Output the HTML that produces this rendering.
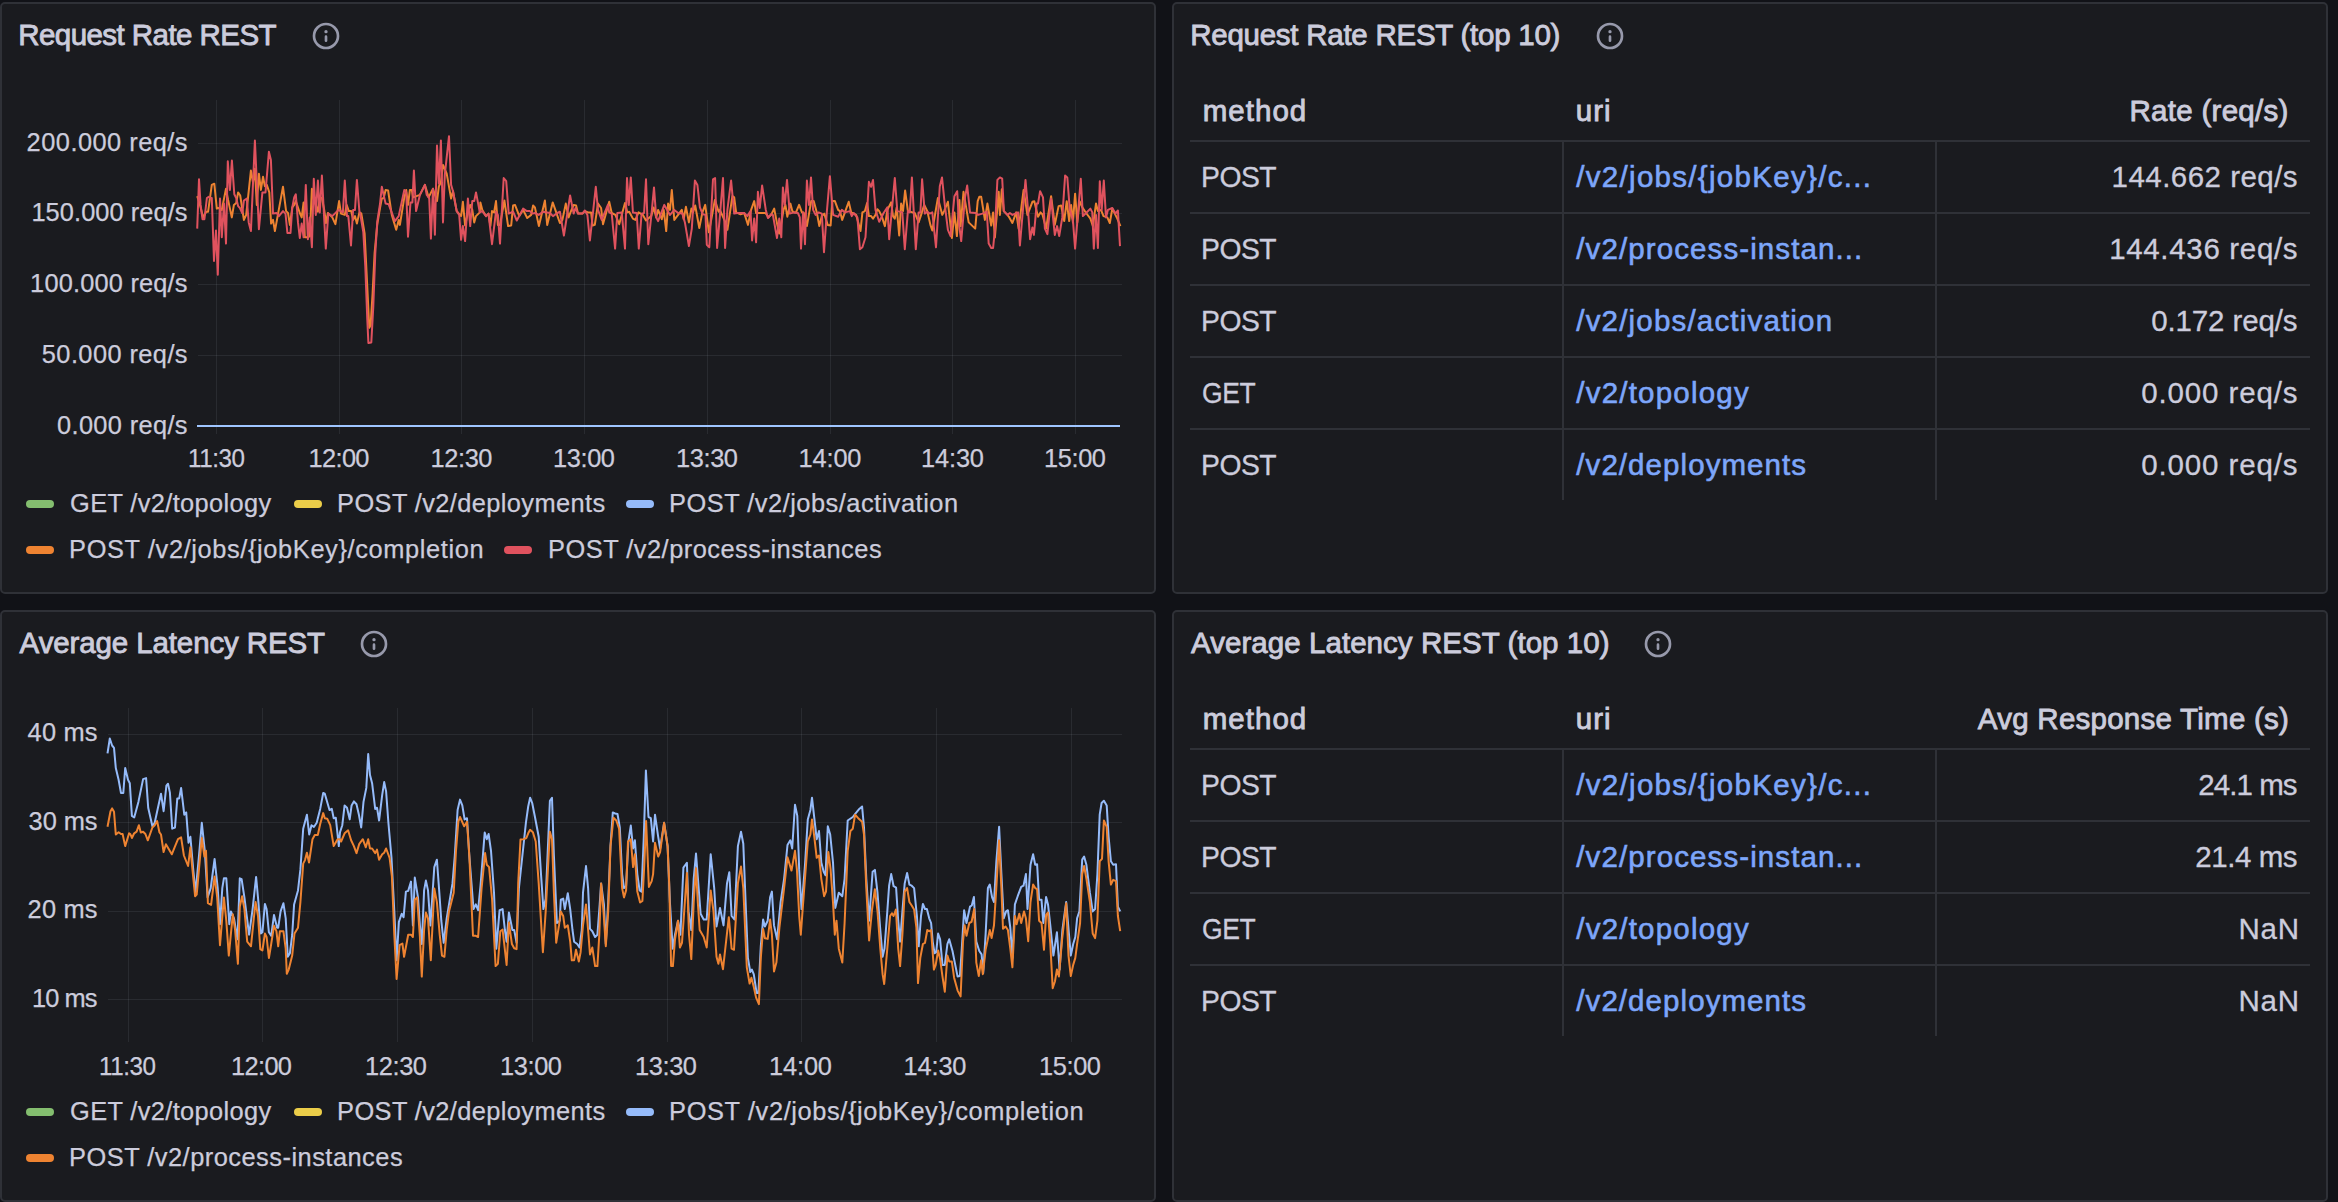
<!DOCTYPE html>
<html lang="en"><head><meta charset="utf-8"><title>REST API dashboard</title>
<style>
html,body{margin:0;padding:0;background:#111217;}
body{width:2338px;height:1202px;position:relative;overflow:hidden;font-family:"Liberation Sans",Arial,sans-serif;color:#ccccdc;}
.panel{position:absolute;box-sizing:border-box;background:#1a1b1f;border:2px solid #2f3137;border-radius:5px;}
.t{position:absolute;white-space:nowrap;line-height:40px;height:40px;color:#ccccdc;}
.title{font-size:29.5px;-webkit-text-stroke:0.85px #ccccdc;}
.th{font-size:29.5px;-webkit-text-stroke:0.85px #ccccdc;}
.td{font-size:29.5px;-webkit-text-stroke:0.3px #ccccdc;}
.lk{font-size:29.5px;color:#7da6fa;-webkit-text-stroke:0.6px #7da6fa;}
.ax{font-size:25.4px;-webkit-text-stroke:0.25px #ccccdc;}
.lg{font-size:25.4px;-webkit-text-stroke:0.25px #ccccdc;}
.mk{position:absolute;display:block;width:28px;height:8px;border-radius:4px;}
.info{position:absolute;}
.hl{position:absolute;height:2px;background:#2f3137;}
.vl{position:absolute;width:2px;background:#2f3137;}
svg.chart{position:absolute;left:0;top:0;}
</style></head><body>

<div class="panel" style="left:0;top:2px;width:1156px;height:592px"></div>
<div class="panel" style="left:1172px;top:2px;width:1156px;height:592px"></div>
<div class="panel" style="left:0;top:610px;width:1156px;height:592px"></div>
<div class="panel" style="left:1172px;top:610px;width:1156px;height:592px"></div>
<svg class="chart" width="2338" height="1202" viewBox="0 0 2338 1202">
<rect x="216" y="100" width="1" height="334" fill="rgb(200,215,225)" fill-opacity="0.09"/>
<rect x="339" y="100" width="1" height="334" fill="rgb(200,215,225)" fill-opacity="0.09"/>
<rect x="461" y="100" width="1" height="334" fill="rgb(200,215,225)" fill-opacity="0.09"/>
<rect x="584" y="100" width="1" height="334" fill="rgb(200,215,225)" fill-opacity="0.09"/>
<rect x="707" y="100" width="1" height="334" fill="rgb(200,215,225)" fill-opacity="0.09"/>
<rect x="830" y="100" width="1" height="334" fill="rgb(200,215,225)" fill-opacity="0.09"/>
<rect x="952" y="100" width="1" height="334" fill="rgb(200,215,225)" fill-opacity="0.09"/>
<rect x="1075" y="100" width="1" height="334" fill="rgb(200,215,225)" fill-opacity="0.09"/>
<rect x="198" y="143" width="924" height="1" fill="rgb(200,215,225)" fill-opacity="0.09"/>
<rect x="198" y="213" width="924" height="1" fill="rgb(200,215,225)" fill-opacity="0.09"/>
<rect x="198" y="284" width="924" height="1" fill="rgb(200,215,225)" fill-opacity="0.09"/>
<rect x="198" y="355" width="924" height="1" fill="rgb(200,215,225)" fill-opacity="0.09"/>
<path d="M197.2 196.1 L200.0 204.9 L203.1 217.4 L206.2 211.7 L208.1 211.7 L211.8 184.9 L214.3 183.7 L216.8 208.6 L218.7 208.0 L221.8 209.9 L226.0 188.7 L228.1 199.9 L231.8 217.4 L233.9 204.9 L236.2 203.0 L238.1 192.4 L240.2 195.5 L243.9 219.9 L246.2 214.9 L250.9 170.6 L253.0 182.4 L254.9 168.7 L256.8 204.9 L258.9 173.7 L260.9 189.9 L263.0 176.8 L264.9 186.2 L266.8 184.9 L269.3 192.4 L271.1 223.6 L273.0 219.9 L274.9 231.1 L283.0 186.8 L286.1 211.1 L288.0 213.0 L289.9 224.9 L292.3 207.4 L294.2 204.9 L295.8 201.1 L299.8 213.0 L301.7 217.4 L303.6 202.4 L304.8 237.3 L307.9 237.3 L309.8 236.1 L311.9 188.7 L313.8 199.9 L315.8 204.9 L317.9 211.7 L319.8 197.4 L321.9 198.0 L324.2 209.9 L326.0 223.0 L327.9 213.0 L332.3 217.4 L335.4 224.2 L339.1 201.1 L341.0 213.6 L344.8 214.9 L346.6 204.9 L348.8 211.1 L351.2 211.1 L353.1 219.9 L355.0 216.1 L356.9 223.6 L359.4 212.4 L361.3 213.3 L364.6 233.3 L366.6 273.2 L369.3 327.8 L370.6 325.1 L372.6 293.2 L374.6 253.2 L377.3 224.0 L380.0 208.0 L381.8 198.6 L383.7 198.0 L385.6 189.9 L388.1 190.5 L391.8 214.9 L396.2 229.8 L398.7 219.9 L399.9 224.9 L404.3 197.4 L406.2 189.9 L408.0 204.9 L409.9 189.9 L411.8 189.9 L413.0 197.4 L419.9 194.9 L424.9 184.9 L428.6 197.4 L431.1 192.4 L433.0 188.7 L434.9 194.9 L437.0 201.1 L438.9 186.2 L440.9 182.4 L443.0 164.9 L446.7 173.7 L451.1 198.6 L453.0 191.2 L456.7 211.1 L461.1 216.1 L462.9 201.8 L465.1 225.5 L467.9 212.4 L470.2 204.9 L472.3 209.9 L474.2 222.4 L476.0 216.1 L479.8 212.4 L480.4 202.4 L482.3 209.9 L486.0 216.1 L488.5 213.6 L490.4 226.1 L492.0 211.1 L494.1 212.4 L496.0 201.1 L497.9 224.9 L500.0 224.9 L504.4 200.5 L508.1 226.1 L511.2 225.5 L513.1 205.5 L515.0 204.9 L519.3 216.1 L523.1 209.9 L527.2 218.0 L531.2 214.9 L533.1 205.5 L534.9 207.4 L538.9 226.1 L544.9 200.5 L547.2 224.9 L552.7 202.4 L556.2 212.4 L559.9 223.0 L562.4 219.9 L565.8 203.6 L568.6 217.4 L570.5 212.4 L573.6 204.9 L576.1 205.5 L578.0 213.6 L582.4 213.6 L584.9 211.1 L588.0 212.4 L591.1 212.4 L592.6 225.5 L594.8 224.9 L598.0 203.6 L601.1 208.0 L603.0 224.2 L609.2 201.8 L611.7 213.0 L615.4 214.9 L619.2 224.2 L625.0 203.0 L627.3 212.4 L629.2 211.7 L632.9 218.6 L635.4 219.9 L638.5 212.4 L642.9 214.9 L646.0 220.5 L651.2 216.1 L653.7 207.4 L656.2 217.4 L658.1 209.9 L661.8 219.2 L663.7 209.9 L666.2 231.1 L668.1 203.6 L670.0 209.9 L671.8 189.9 L674.3 219.9 L678.1 214.9 L681.8 209.9 L683.7 219.2 L685.9 206.8 L688.9 222.4 L691.4 208.6 L693.0 212.4 L695.2 205.5 L699.3 228.0 L702.4 212.4 L705.2 204.9 L708.9 232.3 L714.9 199.9 L718.6 211.7 L719.9 209.9 L724.9 221.1 L727.4 229.8 L732.4 196.1 L734.2 197.4 L736.1 212.4 L740.5 214.2 L744.2 213.0 L748.0 224.9 L751.1 209.9 L754.2 201.1 L756.1 213.0 L765.4 213.0 L768.6 217.4 L771.1 214.9 L774.2 208.6 L777.3 224.9 L779.2 233.6 L781.0 224.9 L783.5 209.9 L785.4 204.9 L787.3 216.7 L790.4 203.6 L792.3 211.1 L794.1 212.4 L796.0 212.4 L799.1 204.9 L801.9 212.4 L803.7 212.4 L806.9 226.1 L811.2 201.1 L813.7 201.1 L816.8 212.4 L819.3 226.1 L821.8 216.1 L824.3 213.6 L827.7 224.9 L830.6 225.5 L832.4 201.1 L834.9 201.1 L838.1 209.9 L839.9 211.1 L842.2 219.9 L844.9 212.4 L848.7 201.8 L851.2 212.4 L856.2 214.9 L860.5 231.1 L862.4 212.4 L864.9 211.1 L867.1 203.0 L868.9 216.1 L871.1 216.1 L873.0 218.6 L875.5 214.9 L877.4 209.3 L879.2 211.1 L881.7 216.1 L884.9 226.1 L887.4 209.9 L891.1 202.4 L893.0 216.1 L894.8 218.6 L896.7 207.4 L899.2 235.5 L901.1 203.6 L903.0 211.1 L905.1 190.5 L907.9 211.1 L914.8 213.0 L918.6 222.4 L921.1 214.9 L924.2 204.9 L927.3 211.1 L930.4 224.9 L932.3 230.5 L937.9 198.0 L942.3 214.9 L944.1 211.1 L947.9 201.8 L951.9 238.0 L954.4 212.4 L956.9 236.1 L959.4 199.9 L960.6 226.1 L963.5 191.8 L968.7 222.4 L975.2 228.6 L977.7 201.2 L979.3 196.8 L981.2 196.8 L984.9 219.9 L987.4 203.6 L991.2 225.5 L993.1 212.4 L994.9 237.4 L998.7 191.8 L999.9 214.9 L1001.8 189.3 L1003.7 211.1 L1007.4 214.9 L1009.3 217.4 L1012.4 223.0 L1016.2 212.4 L1018.6 228.6 L1023.6 189.9 L1027.4 214.9 L1032.4 201.8 L1034.3 201.2 L1038.0 216.8 L1040.5 212.4 L1042.4 214.3 L1046.1 228.6 L1051.1 196.2 L1054.8 224.9 L1058.6 206.1 L1061.1 205.5 L1064.2 221.1 L1066.7 201.2 L1069.2 221.1 L1071.1 204.9 L1072.9 222.4 L1075.1 193.7 L1077.3 222.4 L1079.6 201.2 L1082.3 207.4 L1086.1 213.0 L1090.4 218.6 L1092.9 226.1 L1096.0 203.6 L1097.9 211.1 L1101.0 209.9 L1103.5 216.1 L1107.3 217.4 L1109.8 223.0 L1112.3 208.6 L1117.3 218.6 L1120.4 226.1" fill="none" stroke="#ee8331" stroke-width="2" stroke-linejoin="round" stroke-linecap="butt"/>
<path d="M197.2 228.6 L199.0 179.3 L200.6 204.9 L202.5 219.2 L204.4 219.2 L206.9 198.0 L208.7 196.8 L210.2 198.0 L211.8 198.0 L214.0 261.0 L216.0 230.5 L217.8 274.8 L220.0 198.6 L221.8 237.3 L224.0 203.6 L226.0 243.6 L227.8 161.2 L229.9 189.9 L231.9 160.6 L234.3 194.3 L236.2 198.0 L238.1 206.1 L239.9 208.0 L242.2 213.0 L243.9 200.5 L246.8 198.6 L248.7 222.4 L250.9 231.1 L254.9 140.6 L258.9 229.2 L262.4 192.4 L265.5 192.4 L268.9 151.8 L270.9 160.0 L273.0 213.6 L276.7 213.0 L278.9 216.1 L283.0 211.1 L285.5 213.6 L287.4 233.0 L290.5 233.0 L292.3 207.4 L294.2 197.4 L295.8 194.3 L298.0 222.4 L299.8 238.0 L301.7 223.6 L303.6 237.3 L305.8 184.9 L307.9 239.2 L309.8 217.4 L311.9 247.3 L313.8 178.7 L315.8 214.9 L317.9 180.5 L319.8 212.4 L321.9 175.6 L325.8 248.6 L328.3 213.6 L332.3 216.1 L338.5 209.9 L342.9 212.4 L344.8 180.5 L347.0 216.1 L348.3 216.1 L351.0 245.4 L353.1 209.9 L355.0 209.9 L356.9 179.9 L359.4 211.7 L360.0 212.6 L363.3 232.0 L365.3 266.6 L367.3 319.8 L368.4 343.0 L371.3 342.4 L373.3 306.5 L375.3 253.2 L377.3 221.3 L380.0 204.0 L381.8 186.8 L385.6 203.6 L388.7 204.3 L394.9 221.1 L398.7 216.1 L404.3 189.9 L406.2 192.4 L408.0 236.7 L410.5 202.4 L412.4 202.4 L413.9 170.6 L416.1 211.1 L419.9 194.9 L424.9 184.9 L426.7 194.9 L429.2 198.0 L430.9 238.6 L433.0 188.7 L434.9 234.8 L437.0 145.6 L438.9 183.7 L440.9 140.6 L443.0 222.4 L444.8 174.9 L449.0 136.2 L451.1 184.9 L453.0 191.2 L456.7 211.1 L459.2 214.9 L461.1 239.8 L462.9 226.1 L465.1 241.1 L467.9 198.6 L470.2 226.1 L472.3 201.1 L474.2 201.1 L476.0 192.4 L479.8 212.4 L482.3 211.1 L486.0 216.1 L488.5 213.6 L492.0 244.2 L496.0 211.7 L497.9 214.9 L500.0 243.6 L503.7 178.0 L506.2 181.2 L508.7 213.6 L513.1 211.7 L516.8 220.5 L523.1 208.6 L526.8 211.1 L529.9 211.1 L532.4 213.6 L534.9 213.0 L538.7 214.9 L543.0 211.7 L549.9 213.0 L553.0 216.1 L557.4 213.0 L559.9 211.7 L563.9 235.5 L570.1 195.5 L573.6 213.6 L575.5 208.0 L578.0 213.6 L582.4 213.6 L584.9 210.5 L587.4 214.9 L589.9 240.5 L595.8 186.8 L598.0 209.9 L601.7 219.9 L607.9 204.9 L609.2 212.4 L611.7 213.6 L615.1 248.6 L617.3 213.0 L621.7 212.4 L625.0 248.6 L627.0 178.0 L628.8 204.9 L630.8 177.4 L632.9 212.4 L636.7 213.0 L638.8 248.6 L641.6 213.6 L644.1 213.0 L646.0 179.3 L648.3 244.2 L651.9 209.9 L654.0 187.4 L656.2 217.4 L658.1 221.1 L664.3 204.9 L670.0 214.9 L674.3 209.9 L678.1 213.0 L682.4 213.6 L684.9 222.4 L688.9 246.1 L691.8 228.6 L694.9 180.5 L697.4 184.9 L699.9 207.4 L702.7 214.2 L705.5 214.9 L706.8 244.8 L709.3 247.3 L713.0 179.3 L715.1 178.0 L717.1 247.9 L719.9 216.1 L723.0 178.0 L725.1 247.9 L727.4 209.9 L731.1 180.5 L734.2 213.6 L737.4 213.0 L744.2 213.0 L747.3 216.1 L750.5 211.1 L752.1 240.5 L754.2 218.6 L756.1 242.3 L757.9 191.8 L759.8 208.0 L762.1 185.5 L765.8 209.9 L767.9 218.0 L771.1 214.2 L772.9 214.9 L777.0 238.0 L779.2 218.6 L781.3 237.3 L782.9 187.4 L784.8 204.9 L787.0 179.9 L789.8 213.6 L794.1 212.4 L797.9 213.0 L799.8 217.4 L801.0 248.6 L803.1 212.4 L805.0 244.2 L806.9 180.5 L809.0 204.9 L811.0 177.4 L813.1 209.9 L815.6 214.9 L818.7 212.4 L821.8 213.6 L824.0 252.3 L826.8 212.4 L829.9 176.2 L833.1 214.9 L838.1 216.7 L841.8 209.9 L844.9 212.4 L849.9 211.1 L851.8 216.1 L853.7 213.0 L857.4 217.4 L859.9 249.2 L862.4 247.3 L865.5 237.3 L868.9 181.8 L871.1 186.8 L873.0 179.9 L875.5 209.9 L879.2 221.7 L883.6 213.0 L887.4 207.4 L889.2 239.2 L894.8 178.0 L897.3 211.1 L902.3 212.4 L904.8 249.2 L907.9 211.1 L909.8 212.4 L911.9 177.4 L915.8 249.2 L918.6 212.4 L920.4 212.4 L922.1 179.3 L924.8 213.6 L927.3 211.7 L929.8 213.6 L932.3 212.4 L936.0 247.3 L939.8 186.2 L942.0 177.4 L944.8 204.9 L947.9 229.8 L950.6 236.1 L954.4 196.2 L957.2 191.2 L959.0 223.6 L961.2 241.1 L965.0 197.4 L967.2 185.5 L970.0 212.4 L975.6 213.0 L978.1 214.9 L982.4 213.6 L986.8 211.8 L988.7 243.6 L991.2 248.0 L993.1 248.0 L994.9 229.9 L997.4 179.9 L999.9 177.4 L1002.2 178.7 L1003.9 211.1 L1007.4 214.9 L1009.9 213.0 L1012.4 214.9 L1018.0 212.4 L1019.9 245.5 L1025.5 179.9 L1028.0 209.9 L1030.1 239.2 L1032.4 227.4 L1033.9 234.9 L1036.7 203.6 L1038.0 203.6 L1040.1 191.2 L1043.0 197.4 L1044.9 228.6 L1047.4 234.2 L1051.1 198.7 L1054.8 234.9 L1057.1 226.1 L1059.2 236.1 L1062.3 217.4 L1065.1 175.6 L1067.3 177.4 L1069.8 209.9 L1072.9 219.9 L1075.1 248.6 L1080.8 178.7 L1082.9 216.1 L1086.1 213.0 L1090.4 208.6 L1092.3 212.4 L1093.8 248.6 L1096.0 214.9 L1097.9 248.0 L1099.8 181.2 L1101.7 209.9 L1103.8 180.6 L1106.0 217.4 L1107.9 209.9 L1112.3 208.0 L1115.4 213.6 L1117.9 210.5 L1120.0 246.1" fill="none" stroke="#e0525e" stroke-width="2" stroke-linejoin="round" stroke-linecap="butt"/>
<rect x="197" y="425" width="923" height="2" fill="#9fc5ff"/>
<rect x="128" y="708" width="1" height="334" fill="rgb(200,215,225)" fill-opacity="0.09"/>
<rect x="262" y="708" width="1" height="334" fill="rgb(200,215,225)" fill-opacity="0.09"/>
<rect x="397" y="708" width="1" height="334" fill="rgb(200,215,225)" fill-opacity="0.09"/>
<rect x="532" y="708" width="1" height="334" fill="rgb(200,215,225)" fill-opacity="0.09"/>
<rect x="667" y="708" width="1" height="334" fill="rgb(200,215,225)" fill-opacity="0.09"/>
<rect x="801" y="708" width="1" height="334" fill="rgb(200,215,225)" fill-opacity="0.09"/>
<rect x="936" y="708" width="1" height="334" fill="rgb(200,215,225)" fill-opacity="0.09"/>
<rect x="1071" y="708" width="1" height="334" fill="rgb(200,215,225)" fill-opacity="0.09"/>
<rect x="108" y="734" width="1014" height="1" fill="rgb(200,215,225)" fill-opacity="0.09"/>
<rect x="108" y="822" width="1014" height="1" fill="rgb(200,215,225)" fill-opacity="0.09"/>
<rect x="108" y="911" width="1014" height="1" fill="rgb(200,215,225)" fill-opacity="0.09"/>
<rect x="108" y="999" width="1014" height="1" fill="rgb(200,215,225)" fill-opacity="0.09"/>
<path d="M107.5 753.4 L109.8 738.5 L112.1 745.5 L114.0 747.8 L115.8 768.1 L118.6 779.7 L121.0 793.0 L123.3 793.0 L125.2 768.1 L128.0 779.7 L129.8 783.2 L131.9 815.9 L134.2 817.5 L138.4 801.9 L143.1 779.1 L146.1 778.1 L148.2 807.7 L152.4 826.3 L154.7 822.8 L161.0 793.7 L163.6 811.2 L166.4 785.6 L168.0 783.7 L169.9 792.6 L172.2 828.7 L175.0 827.5 L177.3 798.4 L179.2 798.4 L181.1 787.9 L184.3 814.7 L186.2 812.4 L188.5 842.7 L190.4 836.8 L193.2 869.4 L195.5 892.7 L199.0 855.5 L201.8 822.8 L204.8 850.8 L207.6 897.4 L210.7 888.1 L214.6 859.0 L217.7 888.1 L220.0 924.2 L222.3 888.1 L223.9 878.3 L226.3 878.3 L229.3 924.2 L230.9 911.4 L234.0 918.4 L237.5 939.3 L239.8 878.3 L241.6 879.2 L244.4 897.4 L249.1 934.7 L252.6 909.1 L256.1 876.9 L258.4 902.1 L260.8 933.5 L262.4 932.3 L264.9 903.9 L266.6 909.1 L268.9 932.3 L271.2 935.8 L274.0 914.9 L277.1 927.7 L278.2 927.7 L280.6 911.4 L283.4 903.2 L285.7 918.4 L287.8 956.8 L289.9 953.3 L292.2 934.7 L294.1 904.4 L298.0 890.4 L300.4 869.4 L303.2 828.7 L306.9 814.7 L309.2 834.5 L311.5 825.2 L313.9 827.0 L316.7 822.8 L320.2 808.9 L323.2 793.0 L324.8 793.7 L329.5 810.0 L331.8 808.9 L333.7 818.2 L335.8 817.7 L338.8 846.1 L340.0 832.2 L342.3 825.2 L344.6 805.4 L347.0 807.7 L349.7 819.4 L351.6 805.4 L353.9 801.4 L356.5 804.2 L358.9 814.7 L361.2 827.5 L363.5 801.9 L366.3 787.9 L368.2 754.1 L370.0 775.1 L372.1 783.2 L375.2 808.9 L377.0 807.7 L379.1 820.5 L382.2 794.9 L384.2 782.1 L386.1 791.4 L388.4 822.8 L391.5 857.8 L394.3 911.4 L396.6 960.3 L398.9 921.9 L401.7 913.7 L403.6 917.2 L405.9 891.6 L408.2 890.9 L411.0 881.6 L412.9 925.4 L414.8 877.6 L418.0 897.4 L419.9 925.4 L421.8 944.0 L424.1 890.4 L425.9 880.6 L428.0 890.4 L430.4 925.4 L434.3 867.1 L436.9 859.7 L439.0 888.1 L441.3 920.7 L443.7 942.8 L446.7 918.4 L452.5 883.4 L454.8 855.5 L457.6 810.0 L460.0 799.6 L462.3 805.4 L464.6 819.4 L467.0 818.2 L469.3 855.5 L473.5 909.1 L475.8 904.4 L478.1 910.2 L480.5 885.8 L484.7 832.6 L486.8 839.2 L488.6 834.0 L491.0 850.8 L494.0 892.7 L496.3 948.7 L499.6 910.2 L502.6 909.1 L504.9 930.0 L506.6 941.7 L508.9 912.5 L512.4 930.0 L514.2 930.0 L516.6 942.8 L518.9 888.1 L522.4 855.5 L525.9 822.8 L528.2 806.5 L530.1 797.7 L532.2 803.0 L535.2 818.2 L538.7 836.8 L541.0 874.1 L543.4 909.1 L545.7 898.6 L549.9 800.7 L552.0 797.7 L553.9 855.5 L556.9 923.0 L559.7 920.7 L560.8 899.7 L563.2 898.6 L564.8 909.1 L567.8 893.2 L570.2 909.1 L572.5 930.0 L574.1 941.7 L577.2 944.0 L579.5 947.5 L581.8 930.0 L583.0 892.7 L586.0 866.0 L588.1 888.1 L590.0 928.9 L592.3 931.2 L595.1 937.0 L597.4 934.7 L599.7 904.4 L601.1 883.4 L603.9 904.4 L605.8 944.0 L608.2 902.1 L610.5 846.1 L612.8 812.4 L615.1 813.5 L617.5 814.0 L619.8 827.5 L622.1 874.1 L624.0 888.1 L626.1 885.8 L628.4 841.5 L630.8 825.6 L633.1 848.5 L634.9 840.3 L637.3 874.1 L639.6 890.4 L641.5 891.6 L643.8 836.8 L645.9 770.4 L648.5 817.0 L650.8 818.2 L653.1 841.5 L655.0 814.7 L658.2 836.8 L660.1 848.5 L664.1 822.8 L667.6 846.1 L669.9 902.1 L672.7 948.7 L675.0 934.7 L678.0 920.7 L680.4 934.7 L683.4 867.6 L686.9 862.9 L688.5 911.4 L691.3 930.0 L693.7 878.8 L696.0 853.6 L698.3 883.4 L700.6 913.7 L703.7 919.5 L706.7 919.5 L710.7 854.3 L714.2 888.1 L716.5 926.5 L720.0 907.9 L723.5 925.4 L727.0 883.4 L729.3 872.2 L731.6 916.0 L734.4 919.5 L737.9 846.1 L741.0 831.7 L743.3 843.8 L745.6 902.1 L747.9 958.0 L750.3 972.0 L751.9 969.6 L753.8 974.3 L756.6 992.9 L758.4 992.9 L760.8 946.3 L763.1 919.5 L764.9 926.5 L767.7 920.7 L770.1 897.4 L771.9 891.6 L774.0 925.4 L777.1 939.3 L780.6 902.1 L784.1 878.8 L787.5 845.0 L790.3 840.3 L792.2 848.5 L795.0 804.7 L797.3 815.9 L799.2 869.4 L801.5 909.1 L805.0 864.8 L807.8 819.4 L810.4 810.0 L812.0 797.7 L814.3 818.2 L816.7 839.2 L819.0 831.0 L821.3 862.5 L823.7 871.8 L825.5 875.3 L827.8 826.3 L830.2 834.5 L833.0 862.5 L835.3 907.9 L838.8 892.7 L842.3 896.2 L844.6 878.8 L847.7 820.5 L852.8 817.0 L855.8 813.1 L859.3 808.9 L862.1 806.5 L864.0 827.5 L866.3 878.7 L869.1 920.7 L872.6 871.8 L874.9 869.9 L877.5 892.7 L880.3 930.0 L882.6 956.8 L884.5 948.6 L887.3 911.4 L889.1 885.7 L891.2 874.1 L893.6 886.2 L896.1 887.6 L898.2 920.7 L900.1 941.6 L902.4 911.4 L904.7 883.4 L907.1 872.9 L909.4 884.6 L911.7 885.7 L914.1 888.1 L916.9 916.0 L918.7 946.3 L921.0 916.0 L922.9 903.9 L925.0 909.0 L926.9 909.0 L929.2 918.3 L931.1 923.0 L932.7 941.6 L934.6 953.3 L936.2 952.1 L938.1 933.5 L940.1 939.3 L942.5 964.9 L944.8 964.9 L947.4 944.0 L949.2 939.3 L952.5 951.0 L954.8 962.6 L957.6 976.6 L959.9 976.1 L961.8 948.6 L964.1 910.2 L966.5 923.0 L970.0 906.7 L971.8 905.5 L973.9 896.9 L976.3 941.6 L979.3 951.0 L981.6 954.4 L983.2 973.1 L985.6 934.6 L987.9 888.1 L989.8 884.6 L992.1 897.4 L994.0 902.0 L996.3 862.4 L999.1 826.8 L1001.4 874.1 L1003.7 918.3 L1006.1 911.4 L1007.9 910.2 L1010.3 927.7 L1012.4 957.9 L1014.9 904.4 L1017.7 896.2 L1021.2 886.9 L1023.5 885.7 L1025.9 874.1 L1027.5 909.0 L1030.5 864.8 L1033.1 854.3 L1035.2 864.8 L1037.1 864.3 L1039.1 899.7 L1041.5 899.7 L1043.3 923.0 L1046.1 896.9 L1048.0 904.4 L1050.3 925.3 L1053.4 955.6 L1056.9 932.3 L1059.6 969.6 L1062.4 930.0 L1066.2 902.0 L1069.0 934.6 L1070.8 955.6 L1073.2 944.0 L1075.3 937.0 L1077.1 918.3 L1079.4 911.4 L1082.2 859.6 L1084.1 856.6 L1086.4 864.8 L1089.9 892.7 L1092.7 911.4 L1095.1 909.0 L1097.4 874.1 L1099.7 814.7 L1101.6 803.0 L1103.9 800.7 L1106.7 805.4 L1108.6 836.8 L1110.9 861.3 L1113.2 864.8 L1116.0 864.3 L1117.9 906.7 L1120.2 911.4" fill="none" stroke="#95bbfa" stroke-width="2" stroke-linejoin="round" stroke-linecap="butt"/>
<path d="M107.5 826.8 L110.5 811.2 L112.1 808.4 L114.0 811.7 L115.8 834.5 L118.6 832.2 L121.0 834.0 L122.6 834.0 L125.2 846.1 L129.1 833.3 L130.3 834.0 L131.9 838.0 L134.2 833.3 L136.6 831.7 L138.9 825.2 L140.8 832.6 L143.1 831.7 L145.4 834.0 L147.8 840.3 L152.4 827.5 L154.7 825.2 L157.1 821.0 L159.4 832.2 L161.0 834.5 L163.6 852.0 L165.9 844.3 L171.8 854.3 L174.6 847.3 L178.0 839.2 L181.1 837.3 L183.9 855.5 L188.1 866.0 L190.4 847.3 L192.0 864.8 L195.1 896.2 L196.7 894.6 L201.8 838.0 L204.4 856.6 L206.0 850.8 L207.9 903.2 L211.1 904.9 L214.6 876.4 L217.2 897.4 L220.0 945.2 L223.9 897.4 L226.3 920.7 L228.8 955.6 L232.8 914.2 L235.1 930.0 L237.9 963.8 L239.8 906.7 L242.1 896.2 L244.4 909.1 L247.2 941.7 L251.0 946.3 L253.8 918.4 L255.6 902.1 L258.0 916.0 L260.3 949.1 L262.4 950.5 L264.9 933.5 L266.6 937.0 L268.9 958.0 L271.2 944.0 L274.0 925.8 L276.4 931.2 L278.2 946.3 L279.9 931.2 L283.4 931.2 L285.7 948.7 L286.8 973.8 L288.7 969.6 L292.2 955.6 L294.5 933.5 L298.0 927.7 L300.4 902.1 L303.2 863.6 L305.0 860.1 L306.9 852.7 L309.0 862.5 L312.5 839.2 L314.8 835.0 L317.8 835.0 L320.2 824.0 L323.2 813.1 L324.8 818.2 L327.2 818.7 L330.2 825.2 L333.7 846.1 L337.6 839.2 L340.0 839.2 L341.1 841.5 L344.6 833.3 L348.1 830.3 L351.1 840.3 L353.9 846.1 L356.5 853.1 L359.3 843.8 L362.8 839.2 L365.8 847.3 L368.2 839.2 L370.0 848.5 L372.1 848.5 L375.2 853.1 L377.0 849.6 L379.1 859.7 L382.2 854.3 L384.2 852.7 L386.1 848.5 L389.6 857.8 L391.9 876.4 L394.3 934.7 L396.6 978.9 L399.6 945.2 L402.4 943.5 L404.1 956.8 L408.2 934.7 L411.0 934.7 L412.9 937.0 L414.8 899.7 L417.1 897.4 L419.9 937.0 L421.8 976.6 L424.1 930.0 L425.9 912.5 L428.0 918.4 L430.8 960.3 L434.3 888.5 L436.9 902.1 L439.7 934.7 L442.0 955.6 L444.4 956.8 L446.7 930.0 L449.0 911.4 L453.7 892.7 L456.0 850.8 L458.3 821.7 L460.0 817.0 L464.2 826.3 L467.0 821.7 L469.3 855.5 L473.0 935.8 L475.8 935.8 L478.1 937.0 L481.6 888.1 L485.1 853.1 L486.8 864.8 L489.1 867.1 L492.1 899.7 L495.6 966.1 L497.9 963.8 L500.3 931.2 L502.6 929.6 L506.6 965.0 L508.9 922.6 L511.9 944.0 L514.2 948.2 L516.6 949.1 L518.2 883.4 L520.5 839.6 L523.6 839.2 L526.4 838.0 L528.2 833.3 L530.1 829.8 L532.9 832.2 L535.7 841.5 L538.7 883.4 L542.9 952.2 L545.7 911.4 L549.9 831.7 L552.0 839.2 L553.9 892.7 L556.2 942.8 L559.0 925.4 L560.8 911.4 L563.2 916.0 L564.8 927.7 L567.8 925.4 L570.2 941.7 L571.8 960.3 L574.1 960.3 L576.0 949.8 L578.8 961.5 L580.6 952.2 L583.0 925.4 L586.0 904.4 L588.1 930.0 L590.0 954.5 L592.3 947.5 L595.1 966.1 L597.4 966.1 L599.3 934.7 L601.1 883.4 L603.5 911.4 L605.8 946.3 L608.2 911.4 L610.5 846.1 L613.5 817.7 L616.3 820.5 L619.1 828.7 L622.1 888.1 L624.0 897.4 L626.1 890.4 L628.0 841.5 L630.8 839.2 L633.1 867.1 L634.9 854.3 L637.3 891.6 L640.1 902.5 L642.4 900.9 L644.3 864.8 L646.1 821.0 L648.9 886.9 L651.7 881.1 L653.1 874.1 L655.0 842.7 L658.2 856.6 L660.1 852.0 L664.1 822.8 L667.6 846.1 L669.2 883.4 L671.1 966.1 L672.9 966.1 L675.0 939.3 L678.0 920.7 L679.9 947.5 L682.0 942.8 L686.9 872.9 L689.0 934.7 L691.3 959.1 L693.7 902.1 L696.0 868.3 L697.8 902.1 L699.7 930.0 L703.7 937.0 L706.7 947.5 L710.7 890.4 L713.5 911.4 L716.5 956.8 L718.4 963.8 L720.0 954.5 L723.0 969.2 L728.8 917.2 L731.6 948.7 L734.0 949.8 L737.9 883.4 L741.0 866.6 L743.3 888.1 L746.8 967.3 L749.6 983.6 L751.4 977.8 L753.8 987.1 L756.1 997.6 L758.9 1004.1 L760.8 958.0 L763.1 928.9 L764.9 938.2 L767.7 938.9 L770.1 919.5 L771.9 934.7 L774.0 971.5 L776.4 962.6 L779.4 927.7 L784.1 888.1 L787.5 857.3 L791.5 870.6 L795.0 850.8 L796.9 869.4 L799.2 916.0 L800.8 934.7 L803.9 892.7 L807.8 841.5 L810.4 834.5 L812.0 819.4 L814.3 836.8 L816.7 857.8 L819.0 855.5 L821.3 878.8 L824.1 896.2 L826.0 891.6 L828.3 852.0 L830.6 869.4 L833.0 902.1 L834.8 934.7 L836.5 920.7 L838.8 948.7 L842.3 962.6 L844.6 923.0 L847.7 850.8 L850.4 831.0 L852.8 828.7 L855.1 814.7 L858.2 818.2 L862.1 821.7 L864.0 834.5 L866.3 888.1 L869.1 940.5 L872.1 909.0 L874.9 889.2 L877.5 911.4 L880.3 948.6 L882.6 974.2 L884.2 984.0 L887.3 948.6 L890.1 916.0 L891.9 913.2 L893.6 916.0 L895.9 909.5 L898.2 948.6 L900.1 966.1 L902.4 934.6 L904.7 891.6 L907.1 888.1 L909.4 902.0 L911.7 905.5 L914.1 909.5 L916.4 927.7 L918.0 983.1 L920.3 957.9 L922.9 944.0 L925.0 942.8 L927.3 930.0 L929.2 931.2 L931.1 930.0 L933.9 969.6 L935.7 964.9 L938.1 950.5 L940.1 959.1 L942.5 976.6 L944.8 991.7 L947.4 955.6 L949.2 961.4 L951.8 961.4 L954.1 977.7 L957.6 990.6 L960.6 996.4 L963.0 941.6 L964.6 925.3 L966.5 935.8 L969.3 923.0 L971.6 921.8 L974.2 909.0 L976.3 962.6 L978.8 976.1 L981.1 960.3 L982.8 974.2 L985.6 949.8 L989.8 930.0 L991.6 938.1 L994.0 925.3 L996.3 888.1 L999.1 840.3 L1001.4 888.1 L1003.0 928.8 L1005.6 926.5 L1007.9 930.0 L1010.3 948.6 L1012.4 967.3 L1014.9 916.0 L1016.6 924.2 L1019.3 913.7 L1021.2 923.0 L1024.0 911.4 L1025.9 918.3 L1028.2 941.2 L1030.5 902.0 L1033.1 884.6 L1035.2 888.1 L1037.1 889.2 L1039.1 920.7 L1041.5 923.0 L1044.0 949.8 L1046.1 914.8 L1048.0 912.5 L1050.3 944.0 L1052.7 988.2 L1055.0 981.2 L1056.9 969.6 L1058.9 976.6 L1062.0 940.5 L1066.2 903.2 L1068.5 955.6 L1070.8 976.1 L1073.2 964.9 L1075.3 957.9 L1077.1 944.0 L1080.1 923.0 L1082.2 874.1 L1084.1 865.9 L1086.4 878.7 L1089.9 902.0 L1092.7 933.5 L1095.1 938.1 L1097.4 920.7 L1099.7 861.3 L1102.0 858.9 L1103.9 820.5 L1106.7 826.8 L1108.6 861.3 L1110.9 884.6 L1113.2 879.9 L1116.0 881.1 L1117.9 916.0 L1120.2 931.2" fill="none" stroke="#ee8331" stroke-width="2" stroke-linejoin="round" stroke-linecap="butt"/>
</svg>
<svg class="info" style="left:310px;top:20px" width="32" height="32" viewBox="0 0 24 24"><path fill="#9799ab" d="M12,2A10,10,0,1,0,22,12,10.01114,10.01114,0,0,0,12,2Zm0,18a8,8,0,1,1,8-8A8.00917,8.00917,0,0,1,12,20Zm0-8.5a1,1,0,0,0-1,1v3a1,1,0,0,0,2,0v-3A1,1,0,0,0,12,11.5Zm0-4a1.25,1.25,0,1,0,1.25,1.25A1.25,1.25,0,0,0,12,7.5Z"/></svg>
<svg class="info" style="left:1594px;top:20px" width="32" height="32" viewBox="0 0 24 24"><path fill="#9799ab" d="M12,2A10,10,0,1,0,22,12,10.01114,10.01114,0,0,0,12,2Zm0,18a8,8,0,1,1,8-8A8.00917,8.00917,0,0,1,12,20Zm0-8.5a1,1,0,0,0-1,1v3a1,1,0,0,0,2,0v-3A1,1,0,0,0,12,11.5Zm0-4a1.25,1.25,0,1,0,1.25,1.25A1.25,1.25,0,0,0,12,7.5Z"/></svg>
<svg class="info" style="left:358px;top:628px" width="32" height="32" viewBox="0 0 24 24"><path fill="#9799ab" d="M12,2A10,10,0,1,0,22,12,10.01114,10.01114,0,0,0,12,2Zm0,18a8,8,0,1,1,8-8A8.00917,8.00917,0,0,1,12,20Zm0-8.5a1,1,0,0,0-1,1v3a1,1,0,0,0,2,0v-3A1,1,0,0,0,12,11.5Zm0-4a1.25,1.25,0,1,0,1.25,1.25A1.25,1.25,0,0,0,12,7.5Z"/></svg>
<svg class="info" style="left:1642px;top:628px" width="32" height="32" viewBox="0 0 24 24"><path fill="#9799ab" d="M12,2A10,10,0,1,0,22,12,10.01114,10.01114,0,0,0,12,2Zm0,18a8,8,0,1,1,8-8A8.00917,8.00917,0,0,1,12,20Zm0-8.5a1,1,0,0,0-1,1v3a1,1,0,0,0,2,0v-3A1,1,0,0,0,12,11.5Zm0-4a1.25,1.25,0,1,0,1.25,1.25A1.25,1.25,0,0,0,12,7.5Z"/></svg>
<i class="mk" style="left:26px;top:500px;background:#84be6f"></i>
<i class="mk" style="left:294px;top:500px;background:#ebcd49"></i>
<i class="mk" style="left:626px;top:500px;background:#95bbfa"></i>
<i class="mk" style="left:26px;top:546px;background:#ee8331"></i>
<i class="mk" style="left:504px;top:546px;background:#e0525e"></i>
<i class="mk" style="left:26px;top:1108px;background:#84be6f"></i>
<i class="mk" style="left:294px;top:1108px;background:#ebcd49"></i>
<i class="mk" style="left:626px;top:1108px;background:#95bbfa"></i>
<i class="mk" style="left:26px;top:1154px;background:#ee8331"></i>
<div class="hl" style="left:1190px;top:140px;width:1120px"></div>
<div class="hl" style="left:1190px;top:212px;width:1120px"></div>
<div class="hl" style="left:1190px;top:284px;width:1120px"></div>
<div class="hl" style="left:1190px;top:356px;width:1120px"></div>
<div class="hl" style="left:1190px;top:428px;width:1120px"></div>
<div class="vl" style="left:1562px;top:142px;height:358px"></div>
<div class="vl" style="left:1935px;top:142px;height:358px"></div>
<div class="hl" style="left:1190px;top:748px;width:1120px"></div>
<div class="hl" style="left:1190px;top:820px;width:1120px"></div>
<div class="hl" style="left:1190px;top:892px;width:1120px"></div>
<div class="hl" style="left:1190px;top:964px;width:1120px"></div>
<div class="vl" style="left:1562px;top:750px;height:286px"></div>
<div class="vl" style="left:1935px;top:750px;height:286px"></div>
<span id="t0" class="t title" style="left:18.23px;top:15.00px;letter-spacing:-0.555px;">Request Rate REST</span>
<span id="t1" class="t ax" style="left:26.62px;top:121.60px;letter-spacing:0.472px;">200.000 req/s</span>
<span id="t2" class="t ax" style="left:31.43px;top:192.10px;letter-spacing:0.072px;">150.000 req/s</span>
<span id="t3" class="t ax" style="left:30.12px;top:262.80px;letter-spacing:0.180px;">100.000 req/s</span>
<span id="t4" class="t ax" style="left:41.82px;top:333.60px;letter-spacing:0.417px;">50.000 req/s</span>
<span id="t5" class="t ax" style="left:57.03px;top:404.60px;letter-spacing:0.351px;">0.000 req/s</span>
<span id="t6" class="t ax" style="left:187.67px;top:437.50px;letter-spacing:-0.500px;transform:scaleX(0.9527);transform-origin:0 0;">11:30</span>
<span id="t7" class="t ax" style="left:308.62px;top:437.50px;letter-spacing:-0.667px;">12:00</span>
<span id="t8" class="t ax" style="left:430.62px;top:437.50px;letter-spacing:-0.417px;">12:30</span>
<span id="t9" class="t ax" style="left:553.12px;top:437.50px;letter-spacing:-0.417px;">13:00</span>
<span id="t10" class="t ax" style="left:676.12px;top:437.50px;letter-spacing:-0.417px;">13:30</span>
<span id="t11" class="t ax" style="left:798.62px;top:437.50px;letter-spacing:-0.167px;">14:00</span>
<span id="t12" class="t ax" style="left:921.12px;top:437.50px;letter-spacing:-0.167px;">14:30</span>
<span id="t13" class="t ax" style="left:1044.12px;top:437.50px;letter-spacing:-0.417px;">15:00</span>
<span id="t14" class="t lg" style="left:70.12px;top:483.00px;letter-spacing:0.352px;">GET /v2/topology</span>
<span id="t15" class="t lg" style="left:337.12px;top:483.00px;letter-spacing:0.388px;">POST /v2/deployments</span>
<span id="t16" class="t lg" style="left:669.12px;top:483.00px;letter-spacing:0.494px;">POST /v2/jobs/activation</span>
<span id="t17" class="t lg" style="left:69.12px;top:529.00px;letter-spacing:0.615px;">POST /v2/jobs/{jobKey}/completion</span>
<span id="t18" class="t lg" style="left:548.12px;top:529.00px;letter-spacing:0.488px;">POST /v2/process-instances</span>
<span id="t19" class="t title" style="left:19.62px;top:623.00px;letter-spacing:-0.119px;">Average Latency REST</span>
<span id="t20" class="t ax" style="left:27.62px;top:712.40px;letter-spacing:0.201px;">40 ms</span>
<span id="t21" class="t ax" style="left:28.62px;top:800.80px;letter-spacing:-0.049px;">30 ms</span>
<span id="t22" class="t ax" style="left:27.62px;top:889.20px;letter-spacing:0.201px;">20 ms</span>
<span id="t23" class="t ax" style="left:31.92px;top:977.60px;letter-spacing:-0.874px;">10 ms</span>
<span id="t24" class="t ax" style="left:99.17px;top:1045.50px;letter-spacing:-0.500px;transform:scaleX(0.9527);transform-origin:0 0;">11:30</span>
<span id="t25" class="t ax" style="left:231.12px;top:1045.50px;letter-spacing:-0.667px;">12:00</span>
<span id="t26" class="t ax" style="left:365.12px;top:1045.50px;letter-spacing:-0.417px;">12:30</span>
<span id="t27" class="t ax" style="left:500.12px;top:1045.50px;letter-spacing:-0.417px;">13:00</span>
<span id="t28" class="t ax" style="left:635.12px;top:1045.50px;letter-spacing:-0.417px;">13:30</span>
<span id="t29" class="t ax" style="left:769.12px;top:1045.50px;letter-spacing:-0.167px;">14:00</span>
<span id="t30" class="t ax" style="left:903.62px;top:1045.50px;letter-spacing:-0.167px;">14:30</span>
<span id="t31" class="t ax" style="left:1039.12px;top:1045.50px;letter-spacing:-0.417px;">15:00</span>
<span id="t32" class="t lg" style="left:70.12px;top:1091.00px;letter-spacing:0.352px;">GET /v2/topology</span>
<span id="t33" class="t lg" style="left:337.12px;top:1091.00px;letter-spacing:0.388px;">POST /v2/deployments</span>
<span id="t34" class="t lg" style="left:669.12px;top:1091.00px;letter-spacing:0.615px;">POST /v2/jobs/{jobKey}/completion</span>
<span id="t35" class="t lg" style="left:69.12px;top:1137.00px;letter-spacing:0.488px;">POST /v2/process-instances</span>
<span id="t36" class="t title" style="left:1190.22px;top:15.00px;letter-spacing:-0.258px;">Request Rate REST (top 10)</span>
<span id="t37" class="t th" style="left:1202.72px;top:91.00px;letter-spacing:1.032px;">method</span>
<span id="t38" class="t th" style="left:1575.83px;top:91.00px;letter-spacing:0.960px;">uri</span>
<span id="t39" class="t th" style="left:2129.43px;top:91.00px;letter-spacing:0.294px;">Rate (req/s)</span>
<span id="t40" class="t td" style="left:1201.22px;top:156.60px;letter-spacing:-0.500px;transform:scaleX(0.9598);transform-origin:0 0;">POST</span>
<span id="t41" class="t lk" style="left:1576.30px;top:156.60px;letter-spacing:1.300px;">/v2/jobs/{jobKey}/c...</span>
<span id="t42" class="t td" style="left:2111.55px;top:156.60px;letter-spacing:0.470px;">144.662 req/s</span>
<span id="t43" class="t td" style="left:1201.22px;top:228.60px;letter-spacing:-0.500px;transform:scaleX(0.9598);transform-origin:0 0;">POST</span>
<span id="t44" class="t lk" style="left:1576.30px;top:228.60px;letter-spacing:1.101px;">/v2/process-instan...</span>
<span id="t45" class="t td" style="left:2109.15px;top:228.60px;letter-spacing:0.670px;">144.436 req/s</span>
<span id="t46" class="t td" style="left:1201.22px;top:300.60px;letter-spacing:-0.500px;transform:scaleX(0.9598);transform-origin:0 0;">POST</span>
<span id="t47" class="t lk" style="left:1576.30px;top:300.60px;letter-spacing:1.184px;">/v2/jobs/activation</span>
<span id="t48" class="t td" style="left:2151.15px;top:300.60px;letter-spacing:-0.115px;">0.172 req/s</span>
<span id="t49" class="t td" style="left:1202.24px;top:372.60px;letter-spacing:-0.500px;transform:scaleX(0.8995);transform-origin:0 0;">GET</span>
<span id="t50" class="t lk" style="left:1576.30px;top:372.60px;letter-spacing:1.215px;">/v2/topology</span>
<span id="t51" class="t td" style="left:2141.15px;top:372.60px;letter-spacing:0.885px;">0.000 req/s</span>
<span id="t52" class="t td" style="left:1201.22px;top:444.60px;letter-spacing:-0.500px;transform:scaleX(0.9598);transform-origin:0 0;">POST</span>
<span id="t53" class="t lk" style="left:1576.30px;top:444.60px;letter-spacing:1.067px;">/v2/deployments</span>
<span id="t54" class="t td" style="left:2141.15px;top:444.60px;letter-spacing:0.885px;">0.000 req/s</span>
<span id="t55" class="t title" style="left:1191.02px;top:623.00px;letter-spacing:0.053px;">Average Latency REST (top 10)</span>
<span id="t56" class="t th" style="left:1202.72px;top:699.00px;letter-spacing:1.032px;">method</span>
<span id="t57" class="t th" style="left:1575.83px;top:699.00px;letter-spacing:0.960px;">uri</span>
<span id="t58" class="t th" style="left:1977.83px;top:699.00px;letter-spacing:0.250px;">Avg Response Time (s)</span>
<span id="t59" class="t td" style="left:1201.22px;top:764.60px;letter-spacing:-0.500px;transform:scaleX(0.9598);transform-origin:0 0;">POST</span>
<span id="t60" class="t lk" style="left:1576.30px;top:764.60px;letter-spacing:1.300px;">/v2/jobs/{jobKey}/c...</span>
<span id="t61" class="t td" style="left:2198.15px;top:764.60px;letter-spacing:-0.914px;">24.1 ms</span>
<span id="t62" class="t td" style="left:1201.22px;top:836.60px;letter-spacing:-0.500px;transform:scaleX(0.9598);transform-origin:0 0;">POST</span>
<span id="t63" class="t lk" style="left:1576.30px;top:836.60px;letter-spacing:1.101px;">/v2/process-instan...</span>
<span id="t64" class="t td" style="left:2195.15px;top:836.60px;letter-spacing:-0.414px;">21.4 ms</span>
<span id="t65" class="t td" style="left:1202.24px;top:908.60px;letter-spacing:-0.500px;transform:scaleX(0.8995);transform-origin:0 0;">GET</span>
<span id="t66" class="t lk" style="left:1576.30px;top:908.60px;letter-spacing:1.215px;">/v2/topology</span>
<span id="t67" class="t td" style="left:2238.45px;top:908.60px;letter-spacing:0.845px;">NaN</span>
<span id="t68" class="t td" style="left:1201.22px;top:980.60px;letter-spacing:-0.500px;transform:scaleX(0.9598);transform-origin:0 0;">POST</span>
<span id="t69" class="t lk" style="left:1576.30px;top:980.60px;letter-spacing:1.067px;">/v2/deployments</span>
<span id="t70" class="t td" style="left:2238.45px;top:980.60px;letter-spacing:0.845px;">NaN</span>
</body></html>
